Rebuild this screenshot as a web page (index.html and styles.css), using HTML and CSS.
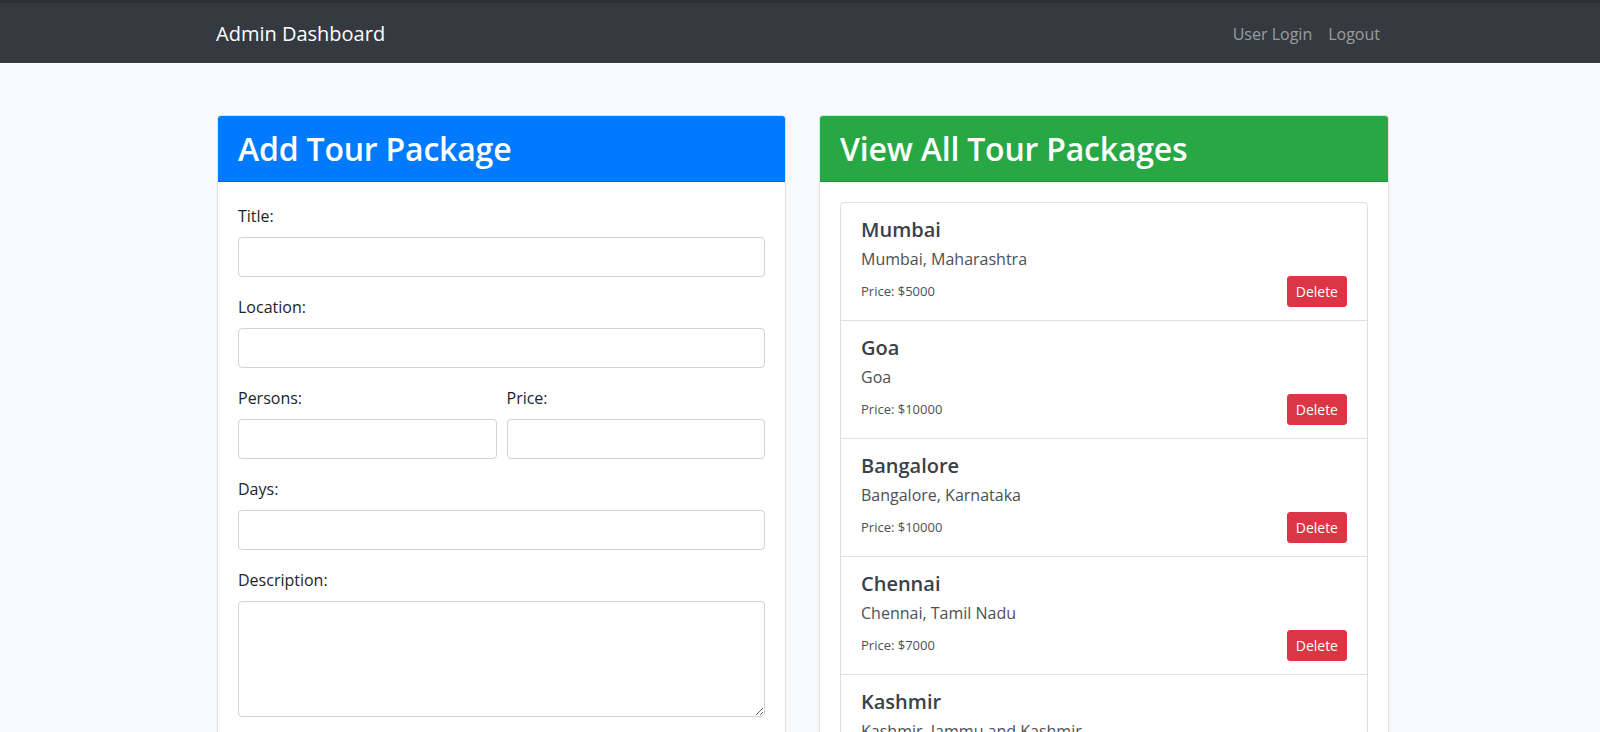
FILE: index.html
```html
<!DOCTYPE html>
<html lang="en">
<head>
<meta charset="utf-8">
<title>Admin Dashboard</title>
<link rel="stylesheet" href="styles.css">
</head>
<body>
<nav class="navbar">
  <div class="wrap nav-inner">
    <a class="brand" href="#">Admin Dashboard</a>
    <div class="nav-links">
      <a class="nav-link" href="#">User Login</a>
      <a class="nav-link" href="#">Logout</a>
    </div>
  </div>
</nav>
<main class="wrap grid">
  <section class="card">
    <div class="card-header blue"><h2>Add Tour Package</h2></div>
    <form class="card-body form">
      <div class="group">
        <label>Title:</label>
        <input class="control" type="text">
      </div>
      <div class="group">
        <label>Location:</label>
        <input class="control" type="text">
      </div>
      <div class="group two">
        <div>
          <label>Persons:</label>
          <input class="control" type="text">
        </div>
        <div>
          <label>Price:</label>
          <input class="control" type="text">
        </div>
      </div>
      <div class="group">
        <label>Days:</label>
        <input class="control" type="text">
      </div>
      <div class="group">
        <label>Description:</label>
        <textarea class="control area"></textarea>
      </div>
    </form>
  </section>
  <section class="card">
    <div class="card-header green"><h2>View All Tour Packages</h2></div>
    <div class="card-body">
      <ul class="list">
        <li class="item">
          <h5>Mumbai</h5>
          <p class="sub">Mumbai, Maharashtra</p>
          <div class="row"><span class="price">Price: $5000</span><button class="btn-del">Delete</button></div>
        </li>
        <li class="item">
          <h5>Goa</h5>
          <p class="sub">Goa</p>
          <div class="row"><span class="price">Price: $10000</span><button class="btn-del">Delete</button></div>
        </li>
        <li class="item">
          <h5>Bangalore</h5>
          <p class="sub">Bangalore, Karnataka</p>
          <div class="row"><span class="price">Price: $10000</span><button class="btn-del">Delete</button></div>
        </li>
        <li class="item">
          <h5>Chennai</h5>
          <p class="sub">Chennai, Tamil Nadu</p>
          <div class="row"><span class="price">Price: $7000</span><button class="btn-del">Delete</button></div>
        </li>
        <li class="item">
          <h5>Kashmir</h5>
          <p class="sub">Kashmir, Jammu and Kashmir</p>
        </li>
      </ul>
    </div>
  </section>
</main>
</body>
</html>
```

FILE: styles.css
```css
* { box-sizing: border-box; }
html, body { margin: 0; padding: 0; }
body {
  background: #f8f9fa;
  font-family: "Open Sans", "Noto Sans", sans-serif;
  font-size: 16px;
  line-height: 1.5;
  color: #212529;
  overflow: hidden;
}
.wrap {
  margin-left: 216px;
  margin-right: 211px;
}
.navbar {
  background: #343a40;
  border-top: 3px solid #2f3033;
  height: 63px;
}
.nav-inner {
  height: 60px;
  display: flex;
  align-items: center;
  justify-content: space-between;
}
.brand {
  color: #fff;
  font-size: 20px;
  line-height: 30px;
  text-decoration: none;
  padding-top: 2px;
}
.nav-links { display: flex; padding-top: 2px; margin-right: 1px; }
.nav-link {
  color: rgba(255,255,255,.5);
  text-decoration: none;
  padding: 8px 8px;
}
.grid {
  display: grid;
  grid-template-columns: 569px 570px;
  column-gap: 33px;
  padding-top: 52px;
  margin-left: 217px;
}
.card {
  background: #fff;
  border: 1px solid rgba(0,0,0,.125);
  border-radius: 4px;
  min-height: 800px;
}
.card-header {
  padding: 14px 20px 13px;
  border-bottom: 1px solid rgba(0,0,0,.125);
  border-radius: 3px 3px 0 0;
  color: #fff;
}
.card-header h2 {
  margin: 0;
  font-size: 32px;
  font-weight: 600;
  line-height: 38px;
  letter-spacing: -0.2px;
}
.blue { background: #007bff; }
.green { background: #28a745; }
.card-body { padding: 20px; }
.form { padding-top: 22px; }
.group { margin-bottom: 18px; }
.group label {
  display: block;
  line-height: 24px;
  margin-bottom: 9px;
}
.two {
  display: grid;
  grid-template-columns: 1fr 1fr;
  column-gap: 10px;
}
.control {
  display: block;
  width: 100%;
  height: 40px;
  border: 1px solid #ced4da;
  border-radius: 4px;
  background: #fff;
  font: inherit;
  padding: 6px 12px;
}
.area { height: 116px; resize: vertical; }
.list {
  list-style: none;
  margin: 0;
  padding: 0;
  border: 1px solid rgba(0,0,0,.125);
  border-radius: 4px;
}
.item {
  padding: 15px 20px 13px;
  border-top: 1px solid rgba(0,0,0,.125);
}
.item:first-child { border-top: 0; }
.item h5 {
  margin: 0 0 5px;
  font-size: 20px;
  font-weight: 600;
  line-height: 24px;
  color: #3b4046;
}
.sub {
  margin: 0 0 5px;
  line-height: 24px;
  color: #4b5056;
}
.row {
  display: flex;
  justify-content: space-between;
  align-items: center;
}
.price { font-size: 13px; color: #4b5056; }
.btn-del {
  background: #dc3545;
  border: 1px solid #dc3545;
  color: #fff;
  font-family: inherit;
  font-size: 14px;
  line-height: 21px;
  padding: 4px 8px;
  border-radius: 3px;
}
```
